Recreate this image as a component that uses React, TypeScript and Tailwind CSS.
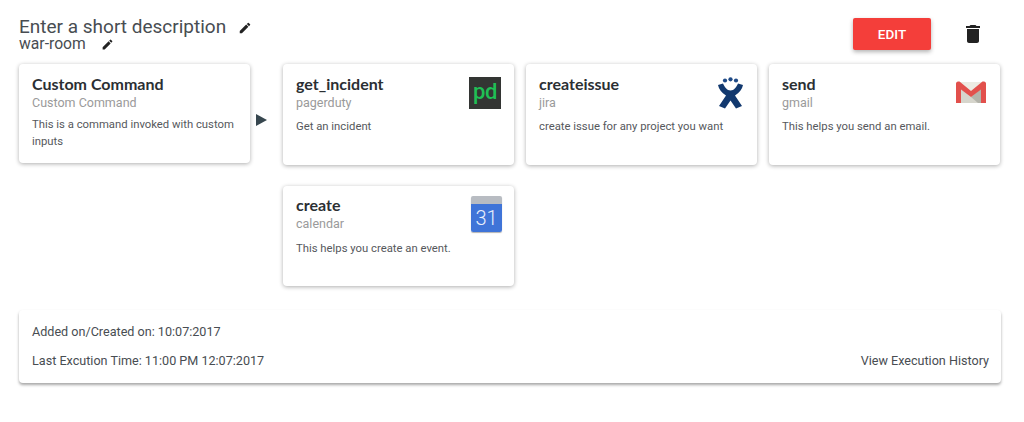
import type { ReactNode } from 'react'

function Pencil({ className }: { className: string }) {
  return (
    <svg viewBox="0 0 24 24" className={className} fill="currentColor">
      <path d="M3 17.25V21h3.75L17.81 9.94l-3.75-3.75L3 17.25zM20.71 7.04a1 1 0 0 0 0-1.41l-2.34-2.34a1 1 0 0 0-1.41 0l-1.83 1.83 3.75 3.75 1.83-1.83z" />
    </svg>
  )
}

function PagerDuty() {
  return (
    <div className="flex h-[32px] w-[32px] items-center justify-center bg-[#333533] font-['Roboto',sans-serif] text-[22px] font-medium leading-none tracking-[-0.3px] text-[#1fbf55]">
      <span className="-mt-[3px]">pd</span>
    </div>
  )
}

function Jira() {
  return (
    <svg viewBox="0 0 27 32" className="h-[32px] w-[27px]">
      <circle cx="8" cy="3.500" r="2.100" fill="#1f4a86" />
      <circle cx="13.500" cy="2.300" r="2.100" fill="#1f4a86" />
      <circle cx="19" cy="3.500" r="2.100" fill="#1f4a86" />
      <path
        d="M1 8l5-1.500c1.500 3.500 4 7 7.500 7s6-3.500 7.500-7L26 8c-.8 4-3.500 7.500-8 10.500l7 10.500-6 2.500-5.500-8-5.500 8-6-2.500 7-10.500C4.500 15.500 1.800 12 1 8z"
        fill="#12396f"
      />
    </svg>
  )
}

function Gmail() {
  return (
    <svg viewBox="0 0 32 23" className="mt-[4px] h-[23px] w-[32px]">
      <rect x="1" y="1" width="30" height="21" rx="1.500" fill="#ecebe3" />
      <path d="M6 22V8l10 8 10-8v14z" fill="#d6d5cc" />
      <path d="M16 16l10-8v14h-3z" fill="#b3b3aa" />
      <path d="M1 2.500C1 1.500 2 .5 3 .5h1.500L16 10 27.500.5H29c1 0 2 1 2 2V22h-5V8.500L16 16 6 8.500V22H1z" fill="#e2504c" />
    </svg>
  )
}

function Calendar() {
  return (
    <div className="-mr-[1px] -mt-[3px] flex h-[36px] w-[31px] flex-col overflow-hidden rounded-[2px] shadow-[0_1px_1px_rgba(0,0,0,0.3)]">
      <div className="h-[8px] bg-[#b8bcc2]" />
      <div className="flex flex-1 items-center justify-center bg-[#3f74d8] font-['Roboto',sans-serif] text-[20px] font-light leading-none text-[#e8eefb]">
        31
      </div>
    </div>
  )
}

function StepCard({
  title,
  sub,
  desc,
  icon,
  size,
  descGap,
}: {
  title: string
  sub: string
  desc: string
  icon?: ReactNode
  size: string
  descGap: string
}) {
  return (
    <div className={`relative w-[231px] rounded-[4px] bg-white pl-[13px] pr-[10px] shadow-[0_1px_4px_rgba(0,0,0,0.32)] ${size}`}>
      <div className="font-['Lato',sans-serif] text-[16px] font-bold leading-[20px] text-[#2b2f33]">{title}</div>
      <div className="mt-[1px] text-[12.500px] leading-[16px] text-[#9a9a9a]">{sub}</div>
      <p className={`text-[11.300px] leading-[17px] text-[#55585c] ${descGap}`}>{desc}</p>
      {icon && <div className="absolute right-[13px] top-[13px]">{icon}</div>}
    </div>
  )
}

export default function App() {
  return (
    <div className="h-[422px] w-[1024px] overflow-hidden bg-white font-['Roboto',sans-serif]">
      <div className="flex items-start justify-between pl-[19px] pr-[39px] pt-[17px]">
        <div>
          <div className="flex h-[20px] items-center text-[19px] leading-[20px] text-[#484d52]">
            Enter a short description
            <Pencil className="ml-[12px] mt-[2px] h-[14px] w-[14px] text-[#222]" />
          </div>
          <div className="flex h-[14px] items-center text-[15.700px] leading-[14px] text-[#484d52]">
            war-room
            <Pencil className="ml-[15px] mt-[1px] h-[13px] w-[13px] text-[#222]" />
          </div>
        </div>
        <div className="flex items-center">
          <button className="mt-[1px] h-[32px] w-[78px] rounded-[2px] bg-[#f43e3a] text-[13.500px] font-medium text-white shadow-[0_2px_4px_rgba(0,0,0,0.3)]">
            EDIT
          </button>
          <svg viewBox="0 0 24 24" className="ml-[30px] mt-[1px] h-[24px] w-[24px]" fill="#222">
            <path d="M6 19c0 1.100.9 2 2 2h8c1.100 0 2-.9 2-2V7H6v12zM19 4h-3.500l-1-1h-5l-1 1H5v2h14V4z" />
          </svg>
        </div>
      </div>

      <div className="mt-[13px] flex items-start pl-[19px]">
        <StepCard
          size="h-[99px] pt-[10px]"
          descGap="mt-[5px]"
          title="Custom Command"
          sub="Custom Command"
          desc="This is a command invoked with custom inputs"
        />
        <div className="flex h-[101px] w-[33px] items-center pl-[6px] pt-[10px]">
          <svg viewBox="0 0 11 12" className="h-[12px] w-[11px]">
            <path d="M0 0l11 6-11 6z" fill="#37474f" />
          </svg>
        </div>
        <div className="grid grid-cols-[231px_231px_231px] gap-x-[12px] gap-y-[21px]">
          <StepCard size="h-[101px] pt-[10px]" descGap="mt-[7px]" title="get_incident" sub="pagerduty" desc="Get an incident" icon={<PagerDuty />} />
          <StepCard size="h-[101px] pt-[10px]" descGap="mt-[7px]" title="createissue" sub="jira" desc="create issue for any project you want" icon={<Jira />} />
          <StepCard size="h-[101px] pt-[10px]" descGap="mt-[7px]" title="send" sub="gmail" desc="This helps you send an email." icon={<Gmail />} />
          <StepCard size="h-[100px] pt-[9px]" descGap="mt-[8px]" title="create" sub="calendar" desc="This helps you create an event." icon={<Calendar />} />
        </div>
      </div>

      <div className="ml-[19px] mt-[24px] w-[982px] rounded-[4px] bg-white pb-[14px] pl-[13px] pr-[12px] pt-[14px] text-[12.600px] leading-[16px] text-[#484d52] shadow-[0_2px_3px_rgba(0,0,0,0.35)]">
        <div>Added on/Created on: 10:07:2017</div>
        <div className="mt-[13px] flex justify-between">
          <span>Last Excution Time: 11:00 PM 12:07:2017</span>
          <span>View Execution History</span>
        </div>
      </div>
    </div>
  )
}
